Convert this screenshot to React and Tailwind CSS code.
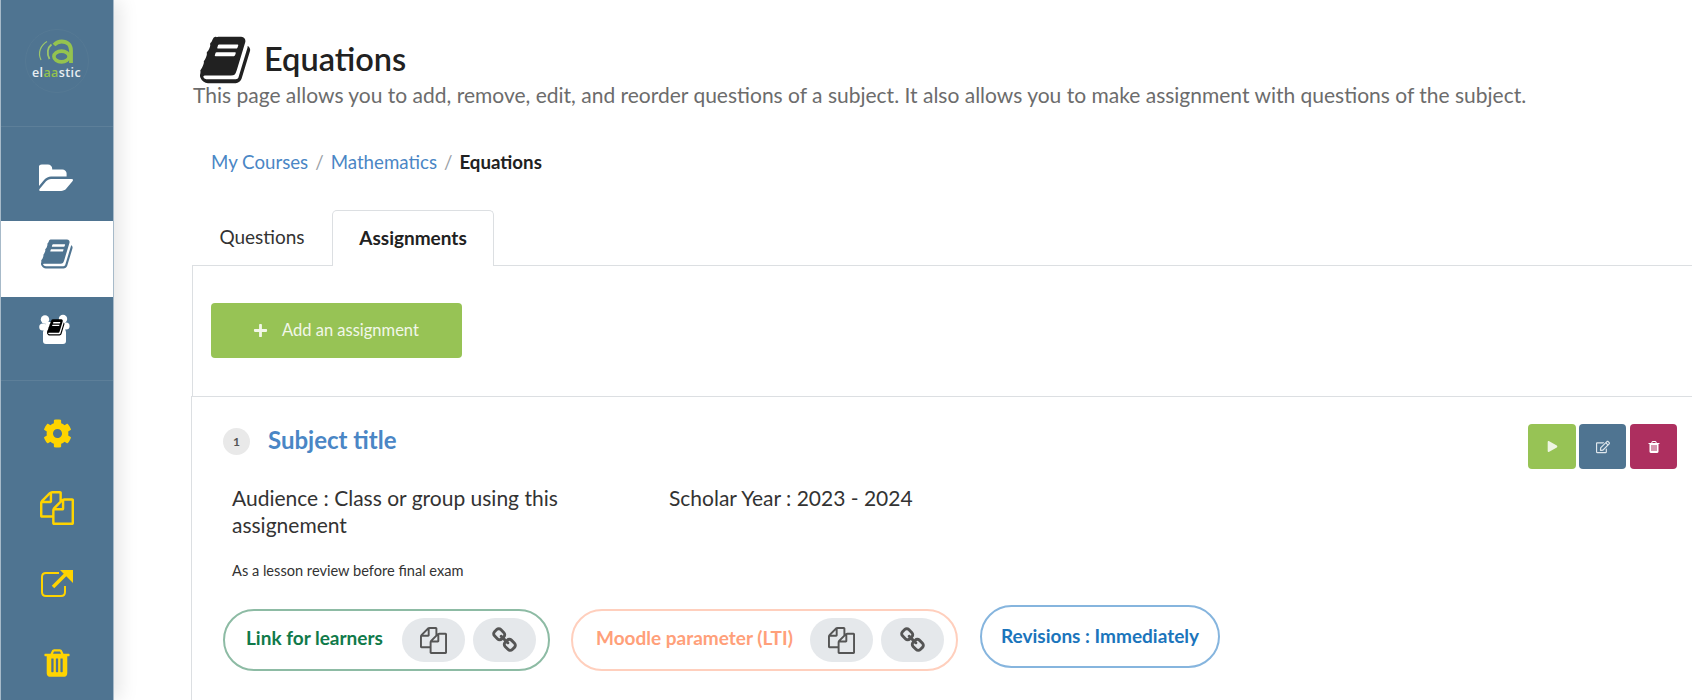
import React from "react";
import { FaCog, FaPlus, FaPlay, FaRegEdit } from "react-icons/fa";

const BOOK = "M1639 478q40 57 18 129l-275 906q-19 64-76.5 107.5t-122.5 43.5h-923q-77 0-148.5-53.5t-99.5-131.5q-24-67-2-127 0-4 3-27t4-37q1-8-3-21.5t-3-19.5q2-11 8-21t16.5-23.5 16.5-23.5q23-38 45-91.5t30-91.5q3-10 .5-30t-.5-28q3-11 17-28t17-23q21-36 42-92t25-90q1-9-2.5-32t.5-28q4-13 22-30.5t22-22.5q19-26 42.5-84.5t27.5-96.5q1-8-3-25.5t-2-26.5q2-8 9-18t18-23 17-21q8-12 16.5-30.5t15-35 16-36 19.5-32 26.5-23.5 36-11.5 47.5 5.5l-1 3q38-9 51-9h761q74 0 114 56t18 130l-274 906q-36 119-71.5 153.5t-128.5 34.5h-869q-27 0-38 15-11 16-1 43 24 70 144 70h923q29 0 56-15.5t35-41.5l300-987q7-22 5-57 38 15 59 43zm-1064 2q-4 13 2 22.5t20 9.5h608q13 0 25.5-9.5t16.5-22.5l21-64q4-13-2-22.5t-20-9.5h-608q-13 0-25.5 9.5t-16.5 22.5zm-83 256q-4 13 2 22.5t20 9.5h608q13 0 25.5-9.5t16.5-22.5l21-64q4-13-2-22.5t-20-9.5h-608q-13 0-25.5 9.5t-16.5 22.5z";
const FILES = "M1696 384q40 0 68 28t28 68v1216q0 40-28 68t-68 28h-960q-40 0-68-28t-28-68v-288h-544q-40 0-68-28t-28-68v-672q0-40 20-88t48-76l408-408q28-28 76-48t88-20h416q40 0 68 28t28 68v328q68-40 128-40h416zm-544 213l-299 299h299v-299zm-640-384l-299 299h299v-299zm196 647l316-316v-416h-384v416q0 40-28 68t-68 28h-416v640h512v-256q0-40 20-88t48-76zm956 804v-1152h-384v416q0 40-28 68t-68 28h-416v640h896z";
const TRASH = "M704 1376v-704q0-14-9-23t-23-9h-64q-14 0-23 9t-9 23v704q0 14 9 23t23 9h64q14 0 23-9t9-23zm256 0v-704q0-14-9-23t-23-9h-64q-14 0-23 9t-9 23v704q0 14 9 23t23 9h64q14 0 23-9t9-23zm256 0v-704q0-14-9-23t-23-9h-64q-14 0-23 9t-9 23v704q0 14 9 23t23 9h64q14 0 23-9t9-23zm-544-992h448l-48-117q-7-9-17-11h-317q-10 2-17 11zm928 32v64q0 14-9 23t-23 9h-96v948q0 83-47 143.5t-113 60.5h-832q-66 0-113-58.5t-47-141.5v-952h-96q-14 0-23-9t-9-23v-64q0-14 9-23t23-9h309l70-167q15-37 54-63t79-26h320q40 0 79 26t54 63l70 167h309q14 0 23 9t9 23z";
const LINK = "M1520 1216q0-40-28-68l-208-208q-28-28-68-28-42 0-72 32 3 3 19 18.5t21.5 21.5 15 19 13 25.5 3.5 27.5q0 40-28 68t-68 28q-15 0-27.5-3.5t-25.5-13-19-15-21.5-21.5-18.5-19q-33 31-33 73 0 40 28 68l206 207q27 27 68 27 40 0 68-26l147-146q28-28 28-67zm-703-705q0-40-28-68l-206-207q-28-28-68-28-39 0-68 27l-147 146q-28 28-28 67 0 40 28 68l208 208q27 27 68 27 42 0 72-31-3-3-19-18.5t-21.5-21.5-15-19-13-25.5-3.5-27.5q0-40 28-68t68-28q15 0 27.5 3.5t25.5 13 19 15 21.5 21.5 18.5 19q33-31 33-73zm895 705q0 120-85 203l-147 146q-83 83-203 83-121 0-204-85l-206-207q-83-83-83-203 0-123 88-209l-88-88q-86 88-208 88-120 0-204-84l-208-208q-84-84-84-204t85-203l147-146q83-83 203-83 121 0 204 85l206 207q83 83 83 203 0 123-88 209l88 88q86-88 208-88 120 0 204 84l208 208q84 84 84 204z";
const FOLDER = "M1815 952q0 31-31 66l-336 396q-43 51-120.5 86.5t-143.5 35.5h-1088q-34 0-60.5-13t-26.5-43q0-31 31-66l336-396q43-51 120.5-86.5t143.5-35.5h1088q34 0 60.5 13t26.5 43zm-343-344v160h-832q-94 0-197 47.5t-164 119.5l-337 396-5 6q0-4-.5-12.5t-.5-12.5v-960q0-92 66-158t158-66h320q92 0 158 66t66 158v32h544q92 0 158 66t66 158z";

function Glyph({ d, className, vb = "0 0 1792 1792" }) {
  return (
    <svg viewBox={vb} className={className} fill="currentColor" aria-hidden="true">
      <path d={d} />
    </svg>
  );
}

function Logo() {
  return (
    <div className="relative w-[64px] h-[64px] rounded-full border border-[#557994] flex flex-col items-center">
      <svg viewBox="0 0 64 40" className="absolute left-0 top-0 w-[64px] h-[40px]" fill="none" aria-hidden="true">
        <ellipse cx="35.5" cy="26.5" rx="7.6" ry="5.4" stroke="#94c34f" strokeWidth="3.6" />
        <path d="M28 15C30.5 12.5 33 11.5 35.5 11.5C41.5 11.5 45 15 45 20.5V33" stroke="#94c34f" strokeWidth="3.8" />
        <path d="M25.5 14.5C21.5 17.5 20.5 23.5 23.5 29" stroke="#9cc66a" strokeWidth="1.8" />
        <path d="M21 11.5C14.5 15.5 11.5 22.5 15 30" stroke="#9cc66a" strokeWidth="1.2" />
      </svg>
      <span className="absolute top-[35px] -ml-[1px] text-[12.5px] leading-[16px] font-semibold tracking-[0.4px] text-[#e8eef2] font-['Open_Sans',sans-serif]">
        el<span className="text-[#94c34f]">aa</span>stic
      </span>
    </div>
  );
}

function TeamIcon() {
  return (
    <svg viewBox="0 0 32 30" className="w-[32px] h-[30px]" aria-hidden="true">
      <g fill="#fff">
        <circle cx="6" cy="5.5" r="4.2" />
        <circle cx="24" cy="5" r="4.2" />
        <circle cx="3.8" cy="13" r="3.6" />
        <circle cx="27" cy="12" r="3.6" />
        <path d="M7 8h17l3 10v9q0 3-3 3H7q-3 0-3-3v-9z" />
      </g>
      <g transform="translate(8 4) scale(0.0105)">
        <path d={BOOK} fill="#000" />
      </g>
    </svg>
  );
}

function NavItem({ className = "", children }) {
  return <div className={`flex items-center justify-center w-full ${className}`}>{children}</div>;
}

function Sidebar() {
  return (
    <aside className="relative z-10 w-[114px] h-full shrink-0 bg-[#4f7491] border-l border-r border-[#a7bac9] shadow-[6px_0_18px_rgba(0,0,0,0.10)] flex flex-col">
      <div className="h-[127px] border-b border-[#5d7f99] flex justify-center pt-[29px]">
        <Logo />
      </div>
      <NavItem className="h-[94px] pt-[10px] text-white">
        <Glyph d={FOLDER} vb="0 0 1920 1792" className="w-[36px] h-[34px]" />
      </NavItem>
      <NavItem className="h-[76px] bg-white text-[#4f7491] pb-[10px] pl-[2px]">
        <Glyph d={BOOK} className="w-[34px] h-[34px]" />
      </NavItem>
      <NavItem className="h-[84px] border-b border-[#5d7f99] pb-[20px] pr-[5px] text-white">
        <TeamIcon />
      </NavItem>
      <NavItem className="h-[104px] text-[#ffd400]">
        <FaCog className="w-[29px] h-[29px]" />
      </NavItem>
      <NavItem className="h-[46px] text-[#ffd400]">
        <Glyph d={FILES} className="w-[34px] h-[34px]" />
      </NavItem>
      <NavItem className="h-[105px] text-[#ffd400]">
        <svg viewBox="0 0 34 30" className="w-[34px] h-[30px]" fill="none" aria-hidden="true">
          <path d="M19 4H6Q2 4 2 8V23Q2 27 6 27H21Q25 27 25 23V17" stroke="currentColor" strokeWidth="2" />
          <path d="M13 18L27 4" stroke="currentColor" strokeWidth="3.6" />
          <path d="M20 1H33V14Z" fill="currentColor" />
        </svg>
      </NavItem>
      <NavItem className="h-[54px] text-[#ffd400]">
        <Glyph d={TRASH} className="w-[32px] h-[34px]" />
      </NavItem>
    </aside>
  );
}

function IconPill({ d }) {
  return (
    <button className="h-[44px] w-[63px] rounded-full bg-[#e5e8eb] text-[#555] flex items-center justify-center">
      <Glyph d={d} className="w-[27px] h-[27px]" />
    </button>
  );
}

function App() {
  return (
    <div className="h-[700px] w-[1692px] overflow-hidden bg-white flex font-['Lato',sans-serif] text-[#212529]">
      <Sidebar />
      <main className="flex-1 min-w-0 pl-[78px]">
        <div className="flex items-center gap-[10px] pl-[8px] pt-[36px] h-[76px]">
          <Glyph d={BOOK} className="w-[54px] h-[54px] text-[#212121] mt-[8px]" />
          <h1 className="text-[32.5px] leading-[40px] font-semibold text-[#212121] pt-[5px]">Equations</h1>
        </div>
        <p className="text-[21px] leading-[30px] text-[#6c6c6c] mt-[4px] pl-px">
          This page allows you to add, remove, edit, and reorder questions of a subject. It also allows you to make assignment with questions of the subject.
        </p>
        <nav className="flex items-center pl-[19px] mt-[39px] text-[18.7px] leading-[27px]">
          <a className="text-[#4a86c5]">My Courses</a>
          <span className="text-[#9aa0a6] px-[7px]">/</span>
          <a className="text-[#4a86c5]">Mathematics</a>
          <span className="text-[#9aa0a6] px-[7px]">/</span>
          <span className="font-bold text-[#212121]">Equations</span>
        </nav>
        <div className="flex items-end mt-[34px] h-[56px] border-b border-[#dcdfe2]">
          <div className="w-[140px] h-[55px] flex items-center justify-center text-[19px] text-[#333]">Questions</div>
          <div className="w-[162px] h-[56px] -mb-px flex items-center justify-center text-[19px] font-bold bg-white border border-b-0 border-[#dcdfe2] rounded-t-[5px] text-[#212121]">Assignments</div>
        </div>
        <div className="border-l border-[#dcdfe2] h-[130px] pl-[18px] pt-[37px]">
          <button className="w-[251px] h-[55px] rounded-[4px] bg-[#97c355] text-[#f2f7e9] flex items-center pl-[42px] gap-[14px] text-[16.5px]">
            <FaPlus className="w-[15px] h-[15px]" />
            <span>Add an assignment</span>
          </button>
        </div>
        <section className="relative border-l border-t border-[#dcdfe2] h-[304px] -ml-px">
          <div className="absolute right-[15px] top-[27px] flex gap-[3px] text-white">
            <button className="w-[48px] h-[45px] rounded-[4px] bg-[#97c355] flex items-center justify-center text-[#eef5e2]"><FaPlay className="w-[11px] h-[11px]" /></button>
            <button className="w-[47px] h-[45px] rounded-[4px] bg-[#4f7491] flex items-center justify-center text-[#dfe7ed]"><FaRegEdit className="w-[14px] h-[14px]" /></button>
            <button className="w-[47px] h-[45px] ml-px rounded-[4px] bg-[#ad2f5f] flex items-center justify-center"><Glyph d={TRASH} className="w-[14px] h-[14px]" /></button>
          </div>
          <div className="flex items-center pl-[31px] pt-[31px]">
            <span className="w-[27px] h-[27px] rounded-full bg-[#e9e9e9] text-[#555] text-[12px] font-bold flex items-center justify-center">1</span>
            <h2 className="ml-[18px] text-[24px] leading-[28px] font-bold text-[#4a86c5] -mt-[3px]">Subject title</h2>
          </div>
          <div className="flex pl-[40px] mt-[29px] text-[21px] leading-[27px] text-[#333]">
            <p className="w-[437px] pr-[60px]">Audience : Class or group using this assignement</p>
            <p>Scholar Year : 2023 - 2024</p>
          </div>
          <p className="pl-[40px] mt-[23px] text-[14.6px] leading-[20px] text-[#333]">As a lesson review before final exam</p>
          <div className="flex items-start pl-[31px] mt-[24px]">
            <div className="mt-[4px] h-[62px] w-[327px] rounded-full border-2 border-[#8dbba4] flex items-center pl-[21px] pb-[3px]">
              <span className="text-[19px] font-bold text-[#107a4a] w-[156px]">Link for learners</span>
              <div className="flex gap-[8px] mt-[3px]"><IconPill d={FILES} /><IconPill d={LINK} /></div>
            </div>
            <div className="ml-[21px] mt-[4px] h-[62px] w-[387px] rounded-full border-2 border-[#ffcfbd] flex items-center pl-[23px] pb-[3px]">
              <span className="text-[19px] font-bold text-[#ffa07a] w-[214px]">Moodle parameter (LTI)</span>
              <div className="flex gap-[8px] mt-[3px]"><IconPill d={FILES} /><IconPill d={LINK} /></div>
            </div>
            <div className="ml-[22px] h-[63px] w-[240px] rounded-full border-2 border-[#86b5de] flex items-center justify-center pb-[1px]">
              <span className="text-[19px] font-bold text-[#1b75bc]">Revisions : Immediately</span>
            </div>
          </div>
        </section>
      </main>
    </div>
  );
}

export default App;
